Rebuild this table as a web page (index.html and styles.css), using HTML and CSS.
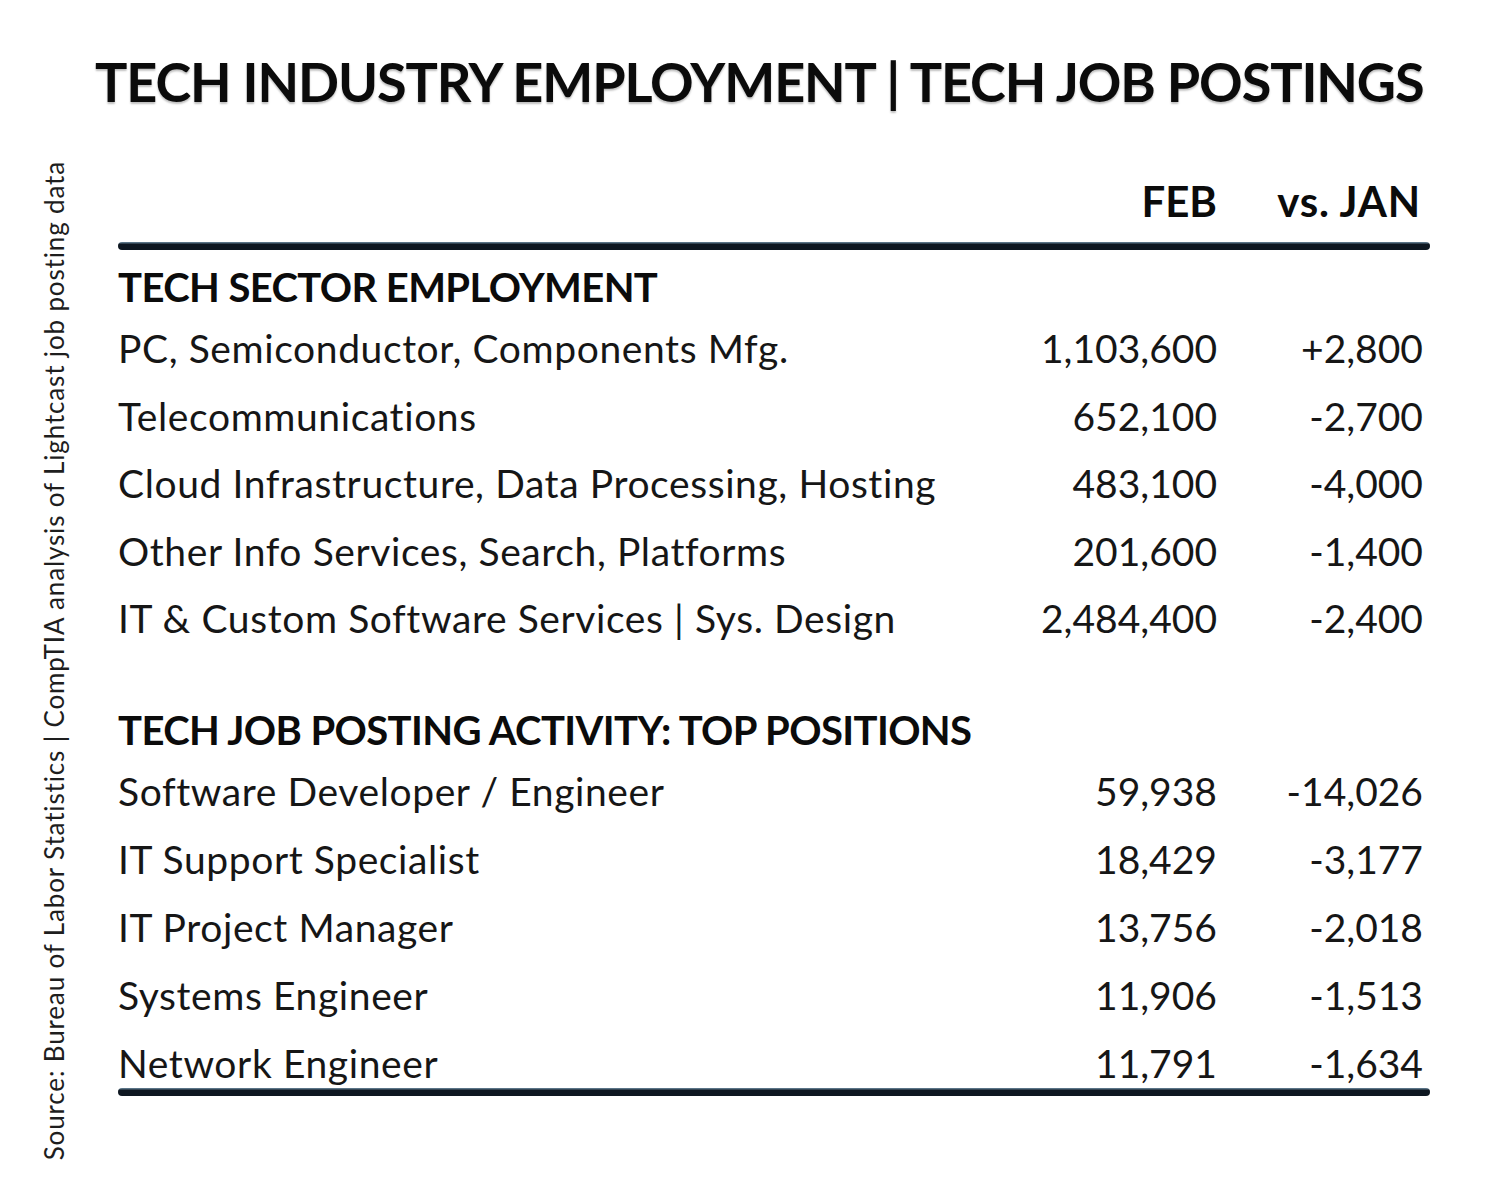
FILE: index.html
```html
<!DOCTYPE html>
<html lang="en">
<head>
<meta charset="utf-8">
<title>Tech Industry Employment | Tech Job Postings</title>
<link rel="stylesheet" href="styles.css">
</head>
<body>
<div class="page">
  <aside class="source">Source: Bureau of Labor Statistics | CompTIA analysis of Lightcast job posting data</aside>
  <main class="main">
    <h1 class="title">TECH INDUSTRY EMPLOYMENT | TECH JOB POSTINGS</h1>
    <section class="table">
      <div class="head">
        <span></span>
        <span class="num">FEB</span>
        <span class="num chg">vs. JAN</span>
      </div>
      <div class="rule"></div>

      <h2 class="section">TECH SECTOR EMPLOYMENT</h2>
      <div class="rows rows-a">
        <div class="row"><span class="label">PC, Semiconductor, Components Mfg.</span><span class="num">1,103,600</span><span class="num chg">+2,800</span></div>
        <div class="row"><span class="label">Telecommunications</span><span class="num">652,100</span><span class="num chg">-2,700</span></div>
        <div class="row"><span class="label">Cloud Infrastructure, Data Processing, Hosting</span><span class="num">483,100</span><span class="num chg">-4,000</span></div>
        <div class="row"><span class="label">Other Info Services, Search, Platforms</span><span class="num">201,600</span><span class="num chg">-1,400</span></div>
        <div class="row"><span class="label">IT &amp; Custom Software Services | Sys. Design</span><span class="num">2,484,400</span><span class="num chg">-2,400</span></div>
      </div>

      <h2 class="section section-b">TECH JOB POSTING ACTIVITY: TOP POSITIONS</h2>
      <div class="rows rows-b">
        <div class="row"><span class="label">Software Developer / Engineer</span><span class="num">59,938</span><span class="num chg">-14,026</span></div>
        <div class="row"><span class="label">IT Support Specialist</span><span class="num">18,429</span><span class="num chg">-3,177</span></div>
        <div class="row"><span class="label">IT Project Manager</span><span class="num">13,756</span><span class="num chg">-2,018</span></div>
        <div class="row"><span class="label">Systems Engineer</span><span class="num">11,906</span><span class="num chg">-1,513</span></div>
        <div class="row"><span class="label">Network Engineer</span><span class="num">11,791</span><span class="num chg">-1,634</span></div>
      </div>
      <div class="rule rule-bottom"></div>
    </section>
  </main>
</div>
</body>
</html>
```

FILE: styles.css
```css
* { box-sizing: border-box; }

html, body {
  margin: 0;
  padding: 0;
  background: #ffffff;
}

body {
  font-family: Lato, "Open Sans", "Liberation Sans", sans-serif;
  color: #141414;
}

.page {
  width: 1497px;
  height: 1200px;
  display: grid;
  grid-template-columns: 95px 1fr;
}

.source {
  grid-column: 1;
  align-self: end;
  justify-self: start;
  margin: 0 0 40px 38px;
  writing-mode: vertical-rl;
  transform: rotate(180deg);
  font-size: 26px;
  line-height: 32px;
  letter-spacing: 0.85px;
  color: #1e1e1e;
  white-space: nowrap;
}

.main {
  grid-column: 2;
  padding-top: 55px;
}

.title {
  margin: 0;
  font-size: 54px;
  line-height: 54px;
  font-weight: 700;
  letter-spacing: -1.1px;
  color: #0b0b0b;
  white-space: nowrap;
  text-shadow: 0 2px 2px rgba(0, 0, 0, 0.25);
}

.table {
  margin-left: 23px;
  width: 1312px;
}

.head,
.row {
  display: grid;
  grid-template-columns: 1fr 220px 206px;
  padding-right: 7px;
  white-space: nowrap;
}

.head {
  margin-top: 67px;
  font-size: 42px;
  line-height: 50px;
  font-weight: 700;
  color: #0b0b0b;
}

.head .chg {
  padding-right: 2px;
  letter-spacing: 0.8px;
}

.num {
  text-align: right;
}

.rule {
  height: 8px;
  margin-top: 16px;
  border-radius: 4px;
  background: linear-gradient(#5a7487 0, #5a7487 1px, #0e1721 2px, #0e1721 100%);
}

.section {
  margin: 12px 0 0 0;
  font-size: 40px;
  line-height: 50px;
  font-weight: 700;
  letter-spacing: -0.6px;
  color: #0b0b0b;
  white-space: nowrap;
}

.section-b {
  margin-top: 63px;
}

.rows {
  display: flex;
  flex-direction: column;
  margin-top: 13px;
}

.rows-a {
  gap: 20.5px;
}

.rows-b {
  gap: 21px;
  margin-top: 13px;
}

.row {
  font-size: 39px;
  line-height: 47px;
  font-weight: 400;
  color: #161616;
}

.label {
  letter-spacing: 0.6px;
}

.rule-bottom {
  margin-top: 1px;
}
```
